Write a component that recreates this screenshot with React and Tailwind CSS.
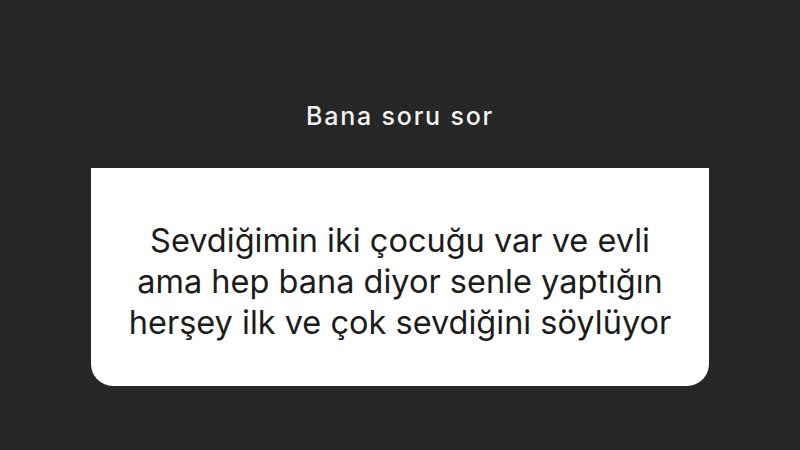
import React from 'react';

const App = () => {
  return (
    <div className="h-[450px] w-[800px] bg-[#262626] flex flex-col items-center overflow-hidden" style={{ fontFamily: 'Inter, Roboto, "Noto Sans", sans-serif' }}>
      <h1 className="mt-[101px] text-[25px] leading-[30px] text-[#f2f2f2] font-medium tracking-[1.8px]">Bana soru sor</h1>
      <div className="mt-[37px] w-[618px] h-[218px] bg-white rounded-b-[22px] flex items-center justify-center pt-[8px]">
        <p className="text-center text-[32.5px] leading-[41px] text-[#1c1c1c] tracking-[0px]">
          Sevdiğimin iki çocuğu var ve evli
          <br />
          ama hep bana diyor senle yaptığın
          <br />
          herşey ilk ve çok sevdiğini söylüyor
        </p>
      </div>
    </div>
  );
};

export default App;
